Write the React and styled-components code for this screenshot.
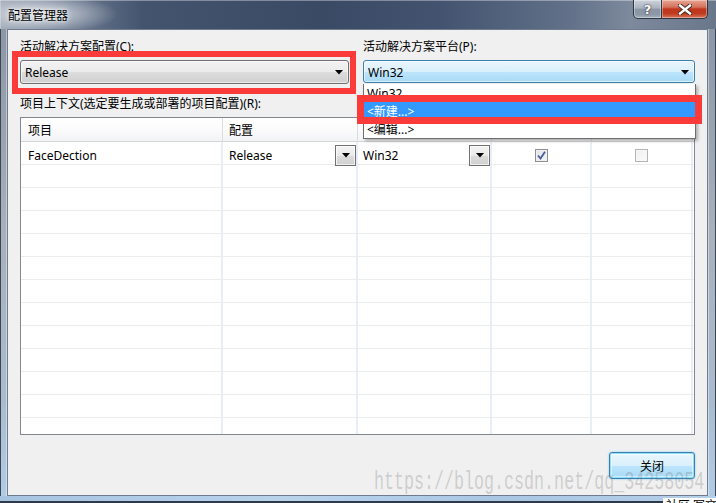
import React from "react";
import styled, { createGlobalStyle } from "styled-components";

const FONT = `"Noto Sans", "Noto Sans CJK SC", sans-serif`;

const Global = createGlobalStyle`
  html, body { margin: 0; padding: 0; }
  body {
    width: 716px;
    height: 503px;
    overflow: hidden;
    background: #ffffff;
    font-family: ${FONT};
  }
`;

const Window = styled.div`
  position: relative;
  width: 716px;
  height: 503px;
  display: flex;
  flex-direction: column;
  overflow: hidden;
  background: #7f8da0;
`;

const TitleBar = styled.div`
  height: 29px;
  flex: none;
  display: flex;
  justify-content: space-between;
  align-items: flex-start;
  background:
    radial-gradient(ellipse 80px 20px at 38px 14px, rgba(222, 226, 232, 0.95), rgba(222, 226, 232, 0) 100%),
    linear-gradient(90deg, #9aa4b3 0%, #6d7b91 10%, #44546f 20%, #3a4a65 45%, #445470 62%, #63728a 80%, #7d8a9d 88%, #6a778b 100%);
  box-shadow: inset 0 1px 0 rgba(255, 255, 255, 0.35), inset 1px 0 0 rgba(255, 255, 255, 0.25);
`;

const TitleText = styled.div`
  padding: 8px 0 0 8px;
  font-size: 12px;
  line-height: 15px;
  color: #000;
  text-shadow: 0 0 6px rgba(255, 255, 255, 0.9), 0 0 3px rgba(255, 255, 255, 0.9);
`;

const CaptionButtons = styled.div`
  display: flex;
  margin-right: 8px;
`;

const CapButton = styled.div`
  width: ${(p) => (p.$close ? 46 : 29)}px;
  height: 19px;
  box-sizing: border-box;
  border: 1px solid #2e3845;
  border-top: none;
  border-left: ${(p) => (p.$close ? "none" : "1px solid #2e3845")};
  border-radius: ${(p) => (p.$close ? "0 0 5px 0" : "0 0 0 5px")};
  display: flex;
  align-items: center;
  justify-content: center;
  background: ${(p) =>
    p.$close
      ? "linear-gradient(180deg, #e7a592 0%, #d3715b 40%, #c0361c 50%, #bf3a1f 75%, #d8775a 100%)"
      : "linear-gradient(180deg, #cdd3dc 0%, #a9b2bf 45%, #8a95a5 52%, #8d98a7 80%, #a6b0bd 100%)"};
  box-shadow: inset 0 0 0 1px rgba(255, 255, 255, 0.35);
  color: #fff;
  font-family: "DejaVu Sans", sans-serif;
  font-weight: bold;
  font-size: 13px;
  line-height: 13px;
  text-shadow: 0 0 2px #333, 0 0 1px #222;
`;

const Middle = styled.div`
  flex: 1;
  display: flex;
  min-height: 0;
`;

const SideFrame = styled.div`
  width: ${(p) => p.$w}px;
  flex: none;
  background: linear-gradient(180deg, #8c97a6 0%, #a8b1bc 45%, #a9bccf 80%, #b2cce6 100%);
  box-shadow: ${(p) =>
    p.$right
      ? "inset -1px 0 0 #3d4653, inset 1px 0 0 rgba(255,255,255,0.4)"
      : "inset 1px 0 0 #3d4653, inset -1px 0 0 rgba(255,255,255,0.4)"};
`;

const BottomFrame = styled.div`
  height: 7px;
  flex: none;
  background: linear-gradient(90deg, #a6c3e0 0%, #b9d3ec 40%, #a9c6e3 70%, #b4cfe8 100%);
  border-bottom: 2px solid #2f3a46;
  box-sizing: border-box;
`;

const Client = styled.div`
  flex: 1;
  box-sizing: border-box;
  background: #f0f0f0;
  border: 1px solid #6f7c8d;
  padding: 9px 12px 0 12px;
  display: flex;
  flex-direction: column;
  font-size: 12px;
  color: #000;
`;

const TopGrid = styled.div`
  display: grid;
  grid-template-columns: 329px 332px;
  column-gap: 14px;
`;

const Field = styled.div`
  display: flex;
  flex-direction: column;
`;

const Label = styled.div`
  font-size: 12px;
  line-height: 16px;
  height: 16px;
  margin-bottom: 5px;
  white-space: nowrap;
`;

const Combo = styled.div`
  height: ${(p) => (p.$hot ? 23 : 24)}px;
  box-sizing: border-box;
  border-radius: 3px;
  border: 1px solid ${(p) => (p.$hot ? "#3c7fb1" : "#707070")};
  background: ${(p) =>
    p.$hot
      ? "linear-gradient(180deg, #eaf6fd 0%, #d9f0fc 50%, #bee6fd 50%, #a7d9f5 100%)"
      : "linear-gradient(180deg, #f2f2f2 0%, #ebebeb 50%, #dddddd 50%, #cfcfcf 100%)"};
  box-shadow: inset 0 0 0 1px rgba(255, 255, 255, 0.6);
  display: flex;
  align-items: center;
  justify-content: space-between;
  padding: 1px 5px 0 4px;
  font-size: 12px;
`;

const Arrow = () => (
  <svg width="8" height="5" viewBox="0 0 8 5">
    <path d="M0 0 H8 L4 4.5 Z" fill="#000" />
  </svg>
);

const SectionLabel = styled.div`
  margin-top: 12px;
  height: 16px;
  line-height: 16px;
  margin-bottom: 5px;
  white-space: nowrap;
`;

const TableBox = styled.div`
  width: 675px;
  height: 318px;
  box-sizing: border-box;
  border: 1px solid #828790;
  background: #fff;
  overflow: hidden;
`;

const COLS = "202px 135px 134px 100px 101px";

const HeaderRow = styled.div`
  display: grid;
  grid-template-columns: ${COLS};
  height: 24px;
  box-sizing: border-box;
  border-bottom: 1px solid #d5d5d5;
  background: linear-gradient(180deg, #ffffff 0%, #fbfbfc 50%, #f2f3f5 100%);
`;

const HeaderCell = styled.div`
  box-sizing: border-box;
  border-right: 1px solid #dcdcdc;
  padding-left: ${(p) => p.$pad}px;
  padding-top: 1px;
  line-height: 23px;
  white-space: nowrap;
`;

const Row = styled.div`
  display: grid;
  grid-template-columns: ${COLS};
  height: 23px;
  box-sizing: border-box;
  border-bottom: 1px solid #ececec;
`;

const Cell = styled.div`
  box-sizing: border-box;
  border-right: 2px solid #e8eef7;
  padding-left: ${(p) => p.$pad || 0}px;
  display: flex;
  align-items: center;
  justify-content: ${(p) => (p.$center ? "center" : "space-between")};
  white-space: nowrap;
  line-height: 22px;
`;

const CellText = styled.span`
  padding-top: 3px;
`;

const CellDrop = styled.div`
  width: 21px;
  height: 21px;
  box-sizing: border-box;
  border: 1px solid #707070;
  background: linear-gradient(180deg, #f4f4f4 0%, #e9e9e9 50%, #dcdcdc 51%, #d0d0d0 100%);
  box-shadow: inset 0 0 0 1px rgba(255, 255, 255, 0.7);
  display: flex;
  align-items: center;
  justify-content: center;
  margin-top: 1px;
`;

const CheckBox = styled.div`
  width: 13px;
  height: 13px;
  margin-top: 2px;
  box-sizing: border-box;
  border: 1px solid ${(p) => (p.$checked ? "#8e8f8f" : "#b4b4b4")};
  background: ${(p) =>
    p.$checked
      ? "linear-gradient(135deg, #dfe3ea 0%, #f4f6f9 100%)"
      : "linear-gradient(135deg, #f0f0f0 0%, #fbfbfb 100%)"};
  box-shadow: inset 0 0 0 1px ${(p) => (p.$checked ? "#eef0f4" : "#f7f7f7")};
  display: flex;
  align-items: center;
  justify-content: center;
`;

const Check = () => (
  <svg width="9" height="9" viewBox="0 0 9 9">
    <path d="M1 4.5 L3.5 7.5 L8 0.8" fill="none" stroke="#4a5c94" strokeWidth="1.8" />
  </svg>
);

const ButtonRow = styled.div`
  display: flex;
  justify-content: flex-end;
  margin-top: 17px;
`;

const DefaultButton = styled.div`
  width: 86px;
  height: 27px;
  box-sizing: border-box;
  border: 1px solid #3c7fb1;
  border-radius: 3px;
  background: linear-gradient(180deg, #eaf6fd 0%, #d9f0fc 50%, #bee6fd 50%, #a7d9f5 100%);
  box-shadow: inset 0 0 0 1px #8ee0f9, inset 0 0 0 2px rgba(255, 255, 255, 0.5), 0 0 2px #6cc7f0;
  display: flex;
  align-items: center;
  justify-content: center;
  font-size: 12px;
  padding-top: 1px;
`;

const DropList = styled.div`
  position: absolute;
  left: 363px;
  top: 84px;
  width: 333px;
  box-sizing: border-box;
  border: 1px solid #6e6e6e;
  border-top: none;
  background: #fff;
  box-shadow: 2px 2px 3px rgba(0, 0, 0, 0.28);
  font-size: 12px;
`;

const DropItem = styled.div`
  height: 18px;
  box-sizing: border-box;
  padding-top: 2px;
  line-height: 16px;
  padding-left: 3px;
  background: ${(p) => (p.$active ? "#3399ff" : "transparent")};
  color: ${(p) => (p.$active ? "#fff" : "#000")};
  white-space: nowrap;
`;

const Annotation = styled.div`
  position: absolute;
  left: ${(p) => p.$x}px;
  top: ${(p) => p.$y}px;
  width: ${(p) => p.$w}px;
  height: ${(p) => p.$h}px;
  box-sizing: border-box;
  border: ${(p) => p.$t}px solid #fb3a3a;
  pointer-events: none;
`;

const Watermark = styled.div`
  position: absolute;
  left: 374px;
  top: 470px;
  font-family: "Liberation Mono", monospace;
  font-size: 25px;
  line-height: 25px;
  color: rgba(120, 120, 120, 0.3);
  transform: scaleX(0.667);
  transform-origin: left center;
  white-space: nowrap;
  pointer-events: none;
`;

const Corner = styled.div`
  position: absolute;
  left: 663px;
  top: 498px;
  width: 53px;
  height: 5px;
  background: #fff;
  overflow: hidden;
  font-size: 12px;
  line-height: 14px;
  color: #000;
  white-space: nowrap;
`;

const CornerText = styled.div`
  margin-top: 1px;
  padding-left: 3px;
`;

const rows = Array.from({ length: 14 });

export default function App() {
  return (
    <>
      <Global />
      <Window>
        <TitleBar>
          <TitleText>配置管理器</TitleText>
          <CaptionButtons>
            <CapButton>?</CapButton>
            <CapButton $close>
              <svg width="14" height="11" viewBox="0 0 14 11">
                <path d="M2 1.5 L12 9.5 M12 1.5 L2 9.5" stroke="#3a2520" strokeWidth="4.2" strokeLinecap="square" />
                <path d="M2 1.5 L12 9.5 M12 1.5 L2 9.5" stroke="#ffffff" strokeWidth="2.4" strokeLinecap="square" />
              </svg>
            </CapButton>
          </CaptionButtons>
        </TitleBar>
        <Middle>
          <SideFrame $w={7} />
          <Client>
            <TopGrid>
              <Field>
                <Label>活动解决方案配置(C):</Label>
                <Combo>
                  <span>Release</span>
                  <Arrow />
                </Combo>
              </Field>
              <Field>
                <Label>活动解决方案平台(P):</Label>
                <Combo $hot>
                  <span>Win32</span>
                  <Arrow />
                </Combo>
              </Field>
            </TopGrid>
            <SectionLabel>项目上下文(选定要生成或部署的项目配置)(R):</SectionLabel>
            <TableBox>
              <HeaderRow>
                <HeaderCell $pad={7}>项目</HeaderCell>
                <HeaderCell $pad={6}>配置</HeaderCell>
                <HeaderCell $pad={5} />
                <HeaderCell $pad={30} />
                <HeaderCell $pad={30} />
              </HeaderRow>
              {rows.map((_, i) =>
                i === 0 ? (
                  <Row key={i}>
                    <Cell $pad={7}>
                      <CellText>FaceDection</CellText>
                    </Cell>
                    <Cell $pad={6}>
                      <CellText>Release</CellText>
                      <CellDrop>
                        <Arrow />
                      </CellDrop>
                    </Cell>
                    <Cell $pad={5}>
                      <CellText>Win32</CellText>
                      <CellDrop>
                        <Arrow />
                      </CellDrop>
                    </Cell>
                    <Cell $center>
                      <CheckBox $checked>
                        <Check />
                      </CheckBox>
                    </Cell>
                    <Cell $center>
                      <CheckBox />
                    </Cell>
                  </Row>
                ) : (
                  <Row key={i}>
                    <Cell />
                    <Cell />
                    <Cell />
                    <Cell />
                    <Cell />
                  </Row>
                )
              )}
            </TableBox>
            <ButtonRow>
              <DefaultButton>关闭</DefaultButton>
            </ButtonRow>
          </Client>
          <SideFrame $w={8} $right />
        </Middle>
        <BottomFrame />

        <DropList>
          <DropItem>Win32</DropItem>
          <DropItem $active>&lt;新建...&gt;</DropItem>
          <DropItem>&lt;编辑...&gt;</DropItem>
        </DropList>
        <Annotation $x={12} $y={51} $w={344} $h={43} $t={6} />
        <Annotation $x={357} $y={95} $w={345} $h={29} $t={7} />
        <Watermark>https://blog.csdn.net/qq_34258054</Watermark>
        <Corner>
          <CornerText>社区 写文章</CornerText>
        </Corner>
      </Window>
    </>
  );
}
